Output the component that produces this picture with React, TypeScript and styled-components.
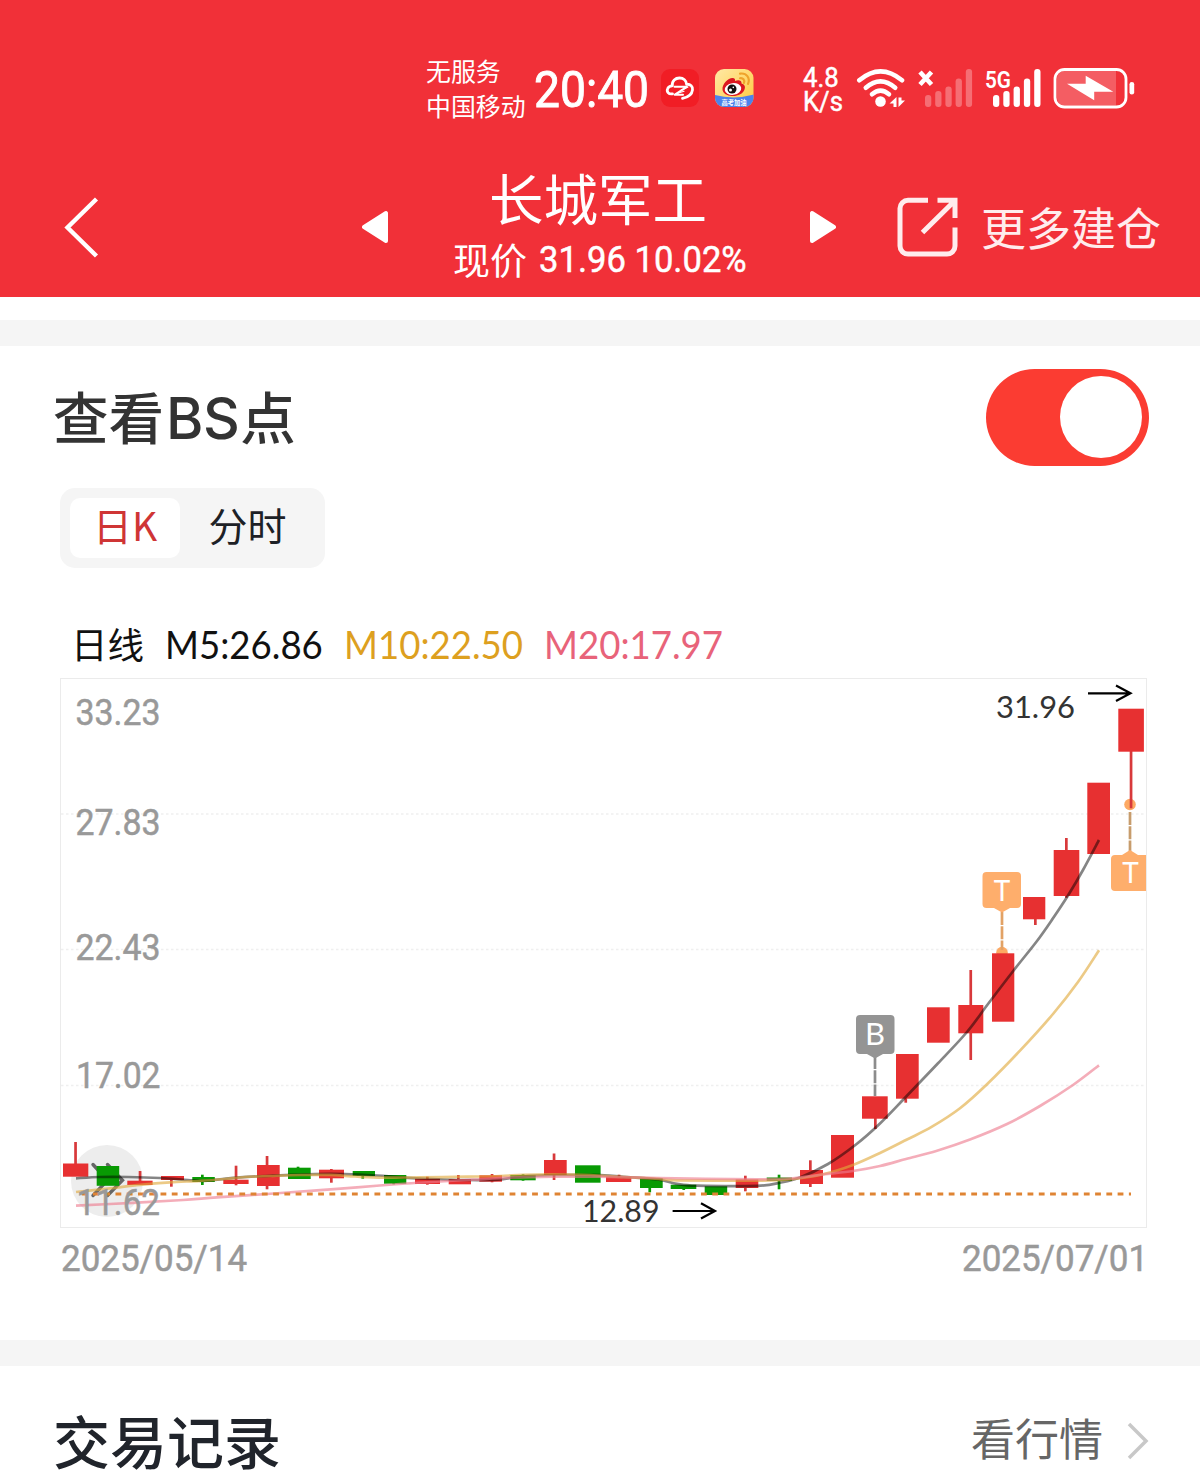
import React from "react";
import styled, { createGlobalStyle } from "styled-components";

const CJK = `"Noto Sans CJK SC", sans-serif`;

const GlobalStyle = createGlobalStyle`
  body { margin: 0; background: #fff; font-family: Lato, ${CJK}; }
  * { box-sizing: border-box; }
  svg { display: block; flex: none; }
`;

const Page = styled.main`
  width: 1200px;
  height: 1480px;
  overflow: hidden;
  background: #fff;
`;

const Header = styled.header`
  height: 297px;
  background: #f13038;
  color: #fff;
`;

const StatusBar = styled.div`
  display: flex;
  align-items: center;
  height: 134px;
  padding: 41px 0 0 426px;
`;

const Carrier = styled.div`
  width: 108px;
  font: 400 24.9px/35px ${CJK};
  white-space: nowrap;
`;

const Squeezed = styled.span<{ $x: number }>`
  display: inline-block;
  transform: scaleX(${(p) => p.$x});
  transform-origin: left center;
  white-space: pre;
`;

const Clock = styled.div`
  width: 127px;
  padding-top: 5px;
  font: 400 50.5px/50px Roboto, sans-serif;
  -webkit-text-stroke: 0.9px currentColor;
`;

const AppIcons = styled.div`
  display: flex;
  gap: 16px;
  width: 142px;
`;

const NetSpeed = styled.div`
  width: 53px;
  padding-top: 4px;
  font: 400 27px/24px Roboto, sans-serif;
  -webkit-text-stroke: 0.5px currentColor;
`;

const NavBar = styled.nav`
  display: flex;
  align-items: center;
  height: 163px;
  padding: 0 0 0 64px;
  & > svg { margin-top: 23px; }
`;

const StockTitle = styled.div`
  display: flex;
  flex-direction: column;
  align-items: center;
  width: 420px;
  padding-top: 20px;
`;

const StockName = styled.h1`
  margin: 0;
  padding-right: 2px;
  font: 400 54.5px/67px ${CJK};
`;

const StockQuote = styled.div`
  display: flex;
  width: 292px;
  font: 400 37px/58px Roboto, ${CJK};
  white-space: nowrap;
`;

const QuoteLabel = styled.span`
  flex: none;
  width: 86px;
  font-family: ${CJK};
  font-weight: 400;
`;

const QuoteValue = styled.span`
  flex: none;
  padding-top: 1px;
  -webkit-text-stroke: 0.5px currentColor;
`;

const MoreLabel = styled.span`
  margin: 22px 0 0 23px;
  font: 400 45px/60px ${CJK};
  color: #ffeced;
  white-space: nowrap;
`;

const Divider = styled.div<{ $top: number }>`
  height: 26px;
  margin-top: ${(p) => p.$top}px;
  background: #f5f5f5;
`;

const SwitchRow = styled.div`
  display: flex;
  justify-content: space-between;
  height: 120px;
  padding: 23px 51px 0 53px;
`;

const SectionTitle = styled.h2<{ $size: number; $color: string; $line: number }>`
  margin: 0;
  font: 500 ${(p) => p.$size}px/${(p) => p.$line}px ${CJK};
  color: ${(p) => p.$color};
  white-space: nowrap;
`;

const TitleLatin = styled.span`
  padding: 0 1px 0 2px;
  font-family: Inter, sans-serif;
  font-size: 57px;
  letter-spacing: -0.5px;
  line-height: 1;
`;

const Switch = styled.button`
  display: flex;
  justify-content: flex-end;
  align-items: center;
  width: 163px;
  height: 97px;
  padding: 0 7px 2px;
  border: 0;
  border-radius: 49px;
  background: #fb3c32;
`;

const Knob = styled.span`
  width: 82px;
  height: 82px;
  border-radius: 50%;
  background: #fff;
`;

const Segments = styled.div`
  display: flex;
  width: 265px;
  height: 80px;
  margin: 22px 0 0 60px;
  padding: 10px;
  border-radius: 15px;
  background: #f5f5f5;
`;

const Segment = styled.button<{ $active?: boolean }>`
  width: ${(p) => (p.$active ? 110 : 135)}px;
  height: 60px;
  padding: 0 0 7px;
  border: 0;
  border-radius: 10px;
  background: ${(p) => (p.$active ? "#fff" : "transparent")};
  color: ${(p) => (p.$active ? "#cf3535" : "#1d2126")};
  font: 400 39px/53px ${CJK};
  white-space: nowrap;
`;

const Legend = styled.div`
  display: flex;
  height: 110px;
  padding: 48px 0 0 71px;
  line-height: 56px;
  white-space: nowrap;
`;

const LegendItem = styled.span<{ $w: number; $color: string; $cjk?: boolean }>`
  width: ${(p) => p.$w}px;
  color: ${(p) => p.$color};
  font-family: ${(p) => (p.$cjk ? CJK : "Lato, sans-serif")};
  font-size: ${(p) => (p.$cjk ? 36.5 : 38.5)}px;
`;

const ChartFrame = styled.div`
  width: 1087px;
  height: 550px;
  margin-left: 60px;
  border: 1px solid #ebebeb;
  & > svg { margin: -1px; }
`;

const DateRow = styled.div`
  display: flex;
  justify-content: space-between;
  height: 112px;
  padding: 4px 53px 0 61px;
  color: #999;
  font: 400 37px/54px Roboto, sans-serif;
  -webkit-text-stroke: 0.5px currentColor;
`;

const DateText = styled.span`
  width: 185px;
`;

const RecordsRow = styled.div`
  display: flex;
  align-items: center;
  justify-content: space-between;
  padding: 32px 51px 0 53px;
`;

const MoreLink = styled.a`
  display: flex;
  align-items: center;
  gap: 24px;
  padding-top: 4px;
  color: #666;
  font: 400 44px/60px ${CJK};
  & > span { margin-top: -9px; }
`;

// x, width, body top, body bottom, wick x, wick top, wick bottom, up
type Candle = [number, number, number, number, number, number, number, 0 | 1];

const candles: Candle[] = [
  [63, 25.3, 1163.5, 1176.7, 75.5, 1142, 1176, 1],
  [96.7, 22.5, 1166, 1185.8, 108, 1166, 1185, 0],
  [127.3, 25.3, 1180.7, 1185, 140, 1171, 1185, 1],
  [161, 23, 1176, 1180, 171.3, 1176, 1186.7, 1],
  [192.3, 22.5, 1177, 1182, 202.3, 1174.7, 1185, 0],
  [223.3, 25.3, 1179.7, 1184, 236, 1165.7, 1185.3, 1],
  [257, 22.7, 1165, 1186, 267, 1156, 1189.3, 1],
  [288, 22.7, 1167.7, 1179, 298, 1166.7, 1179, 0],
  [319, 25, 1169.7, 1178.3, 331.3, 1169, 1182.7, 1],
  [352.7, 22.3, 1171, 1176, 362.7, 1171, 1178.7, 0],
  [384, 22.3, 1175, 1183.7, 393.7, 1175, 1184.3, 0],
  [415, 25, 1178.7, 1184, 427.3, 1176.7, 1184.7, 1],
  [448.7, 22.3, 1179, 1184.3, 458.3, 1175, 1184, 1],
  [479.3, 22.7, 1175.3, 1181.7, 492, 1174, 1182.3, 1],
  [510.3, 25.4, 1175, 1180.3, 523, 1174.3, 1180.7, 0],
  [544, 22.7, 1160, 1175, 554, 1153.5, 1180, 1],
  [575, 25.6, 1165.3, 1182.7, 588, 1166, 1182, 0],
  [606, 25.3, 1176.7, 1182, 619, 1174.7, 1182, 1],
  [640, 22.7, 1178, 1188, 649.7, 1178, 1192.3, 0],
  [670.7, 25.6, 1184.7, 1189, 683.7, 1185, 1190, 0],
  [704.7, 22.5, 1186.3, 1195, 716, 1187, 1195, 0],
  [735.7, 22.6, 1179.5, 1188, 745.3, 1175.7, 1191.3, 1],
  [766.7, 25.3, 1177.5, 1181, 779, 1174.7, 1189.3, 0],
  [800, 23, 1170, 1184, 810.3, 1160.3, 1187, 1],
  [831, 23, 1135, 1177.7, 842, 1136, 1177, 1],
  [862, 25.7, 1096.3, 1118.7, 875.3, 1097, 1129, 1],
  [896, 22.7, 1054, 1098.7, 905.7, 1055, 1102.7, 1],
  [927, 22.7, 1007.3, 1042.7, 938, 1008, 1042, 1],
  [958.3, 25, 1005, 1033.3, 970.7, 970, 1060, 1],
  [992, 22.3, 953.3, 1021.7, 1003, 954, 1021, 1],
  [1023, 22.3, 897, 919.3, 1035.3, 898, 925, 1],
  [1053.7, 25.6, 850, 896, 1066.3, 838, 897.7, 1],
  [1087.3, 22.7, 782.7, 854, 1098, 783, 853, 1],
  [1118.3, 25.6, 708.7, 751.7, 1131, 709, 808.3, 1],
];

const averages: { color: string; opacity: number; points: number[][] }[] = [
  {
    color: "#000", opacity: 0.48,
    points: [[76, 1178.3], [100, 1177], [128, 1177], [160, 1178], [188, 1180], [203, 1180.8], [220, 1179.3], [240, 1177.3], [280, 1175.3], [315, 1174.1], [345, 1174.1], [377, 1175.5], [400, 1177.3], [433, 1179], [467, 1180], [498, 1179.6], [523, 1176.3], [553, 1175], [600, 1175.1], [627, 1177], [658, 1179.5], [677, 1183.8], [697, 1185.7], [757, 1185.8], [780, 1182.7], [800, 1177.5], [828, 1164], [856, 1144.5], [880, 1123.5], [906, 1096.7], [938, 1063.3], [967, 1032], [988, 1004], [1014, 970], [1037, 941], [1053, 918.3], [1068, 895.5], [1083, 870], [1099, 840]],
  },
  {
    color: "#e0aa3c", opacity: 0.62,
    points: [[76, 1192], [110, 1188.3], [140, 1184.8], [170, 1182.3], [200, 1180.9], [225, 1179], [245, 1177], [270, 1176], [300, 1175], [330, 1174.9], [355, 1176.5], [383, 1177.7], [420, 1177.3], [467, 1176.7], [500, 1176], [523, 1174.8], [553, 1174.3], [590, 1175], [620, 1176.8], [655, 1178.7], [677, 1180.3], [757, 1180.7], [790, 1179.5], [823, 1174.3], [853, 1165], [880, 1153], [907, 1139.5], [932, 1126.7], [960, 1108.3], [987, 1084.3], [1020, 1050.7], [1053, 1014], [1078, 982], [1099, 950.3]],
  },
  {
    color: "#ee7b8e", opacity: 0.62,
    points: [[76, 1205.7], [133, 1202.8], [183, 1200], [217, 1197.3], [267, 1194], [317, 1190.3], [357, 1187.3], [406, 1183.5], [440, 1181.5], [473, 1179.7], [510, 1177.7], [553, 1176.7], [600, 1176.7], [660, 1178], [757, 1179.3], [793, 1178.3], [823, 1174.5], [853, 1171], [880, 1166], [906, 1159], [937, 1150.7], [970, 1139.5], [1007, 1124], [1040, 1106], [1073, 1085], [1099, 1065.3]],
  },
];

function smoothPath(pts: number[][]): string {
  let d = `M${pts[0][0]} ${pts[0][1]}`;
  for (let i = 0; i < pts.length - 1; i++) {
    const a = pts[Math.max(0, i - 1)];
    const b = pts[i];
    const c = pts[i + 1];
    const e = pts[Math.min(pts.length - 1, i + 2)];
    d += `C${b[0] + (c[0] - a[0]) / 6} ${b[1] + (c[1] - a[1]) / 6} ${c[0] - (e[0] - b[0]) / 6} ${c[1] - (e[1] - b[1]) / 6} ${c[0]} ${c[1]}`;
  }
  return d;
}

const AxisLabel = styled.text`
  font: 400 37px Roboto, sans-serif;
  fill: #999;
  stroke: #999;
  stroke-width: 0.5px;
`;

const PriceLabel = styled.text`
  font: 400 31.5px Lato, sans-serif;
  fill: #333;
`;

const MarkerLetter = styled.text<{ $size: number }>`
  font: 400 ${(p) => p.$size}px Lato, sans-serif;
  fill: #fff;
  text-anchor: middle;
`;

const axis: [string, number, number, number][] = [
  ["33.23", 75.5, 725, 85],
  ["27.83", 75.5, 835, 85],
  ["22.43", 75.5, 960, 85],
  ["17.02", 76, 1088, 84.5],
  ["11.62", 76.5, 1215, 83.5],
];

function KLineChart() {
  return (
    <svg width="1087" height="550" viewBox="60 678 1087 550">
      {[814, 949.5, 1085.5].map((y) => (
        <path key={y} d={`M61 ${y}H1146`} stroke="#efefef" strokeWidth="1.3" strokeDasharray="2.5 2.5" />
      ))}
      <circle cx="107" cy="1181" r="36" fill="#ededed" />
      <g fill="none" stroke="#666" strokeWidth="3.4" strokeLinecap="round">
        <path d="M93 1164.5L107.5 1180.3L93 1195.5" />
        <path d="M107.5 1164.5L122.5 1180.3L107.5 1195.5" />
      </g>
      <circle cx="1130" cy="804.5" r="5.8" fill="#fda963" />
      <circle cx="1002" cy="952.5" r="5.8" fill="#fda963" />
      {candles.map(([x, w, t, b, wx, wt, wb, up]) => (
        <g key={x} fill={up ? "#e73031" : "#089a03"}>
          <rect x={wx - 1.3} y={wt} width="2.7" height={wb - wt} fill={up ? "#d8393b" : "#089a03"} />
          <rect x={x} y={t} width={w} height={b - t} />
        </g>
      ))}
      {averages.map((a) => (
        <path key={a.color} d={smoothPath(a.points)} fill="none" stroke={a.color} strokeOpacity={a.opacity} strokeWidth="2.7" />
      ))}
      <path d="M81.7 1194H1131" stroke="#df8433" strokeWidth="2.8" strokeDasharray="5.8 5.46" />
      {axis.map(([label, x, y, w]) => (
        <AxisLabel key={label} x={x} y={y} textLength={w} lengthAdjust="spacingAndGlyphs">{label}</AxisLabel>
      ))}
      <g strokeWidth="2.7" strokeDasharray="13 1.2">
        <path d="M875 1056V1096" stroke="#8c8c8c" />
        <path d="M1002 912V950" stroke="#e2a265" />
        <path d="M1130 812V852" stroke="#c79c6c" />
      </g>
      <path d="M860 1015h30.5a4 4 0 0 1 4 4v31a4 4 0 0 1-4 4H883l-8 4.5l-8-4.5h-7a4 4 0 0 1-4-4v-31a4 4 0 0 1 4-4z" fill="#949494" />
      <path d="M986.5 872h30.5a4 4 0 0 1 4 4v28a4 4 0 0 1-4 4h-7l-8 4.5l-8-4.5h-7.5a4 4 0 0 1-4-4v-28a4 4 0 0 1 4-4z" fill="#feae6c" />
      <path d="M1146 855h-8l-8-5l-8 5h-7a4 4 0 0 0-4 4v28a4 4 0 0 0 4 4h31z" fill="#feae6c" />
      <MarkerLetter $size={31} x="875" y="1045">B</MarkerLetter>
      <MarkerLetter $size={28} x="1002" y="900.5">T</MarkerLetter>
      <MarkerLetter $size={28} x="1130.5" y="883">T</MarkerLetter>
      <PriceLabel x="996" y="718" textLength="79" lengthAdjust="spacingAndGlyphs">31.96</PriceLabel>
      <PriceLabel x="582" y="1222" textLength="77.5" lengthAdjust="spacingAndGlyphs">12.89</PriceLabel>
      <g fill="none" stroke="#000" strokeWidth="2.2">
        <path d="M1088 693.3H1130.5M1116 685.5L1130.5 693.3L1116 701" />
        <path d="M672.6 1211H715M701 1203.2L715 1211L701 1218.5" />
      </g>
    </svg>
  );
}

function CloudAppIcon() {
  return (
    <svg width="38" height="38" viewBox="0 0 38 38">
      <rect width="38" height="38" rx="9" fill="#f11d25" />
      <g fill="none" stroke="#fff" strokeWidth="2.8" strokeLinecap="round" strokeLinejoin="round">
        <path d="M11.5 24.8C7.5 25.5 5.3 22.5 6.7 19.5C7.6 17.4 9.5 16.8 11.3 16.8C10.8 11.5 14.5 9 18.5 9C22.5 9 25.3 11.4 25.6 15.3C29.5 15 32 17.5 31.5 20.8C31 25 27 28.3 21.5 29.3" />
        <path d="M13.5 17.8H25.8L13.5 25.8H22" strokeWidth="2" />
        <path d="M20 21.2L27 18M15 24.8L23 22.3" strokeWidth="1.2" />
      </g>
    </svg>
  );
}

function WeiboIcon() {
  return (
    <svg width="39" height="38" viewBox="0 0 39 38">
      <defs>
        <linearGradient id="sky" x1="0" y1="0" x2="1" y2="1">
          <stop offset="0" stopColor="#ffe9a5" />
          <stop offset="1" stopColor="#ffc93c" />
        </linearGradient>
        <clipPath id="tile"><rect width="38.5" height="38" rx="9" /></clipPath>
      </defs>
      <g clipPath="url(#tile)">
        <rect width="39" height="38" fill="url(#sky)" />
        <path d="M0 26Q19 31 39 25.5V38H0z" fill="#4d82ec" />
        <path d="M7.5 20.5C7 15 13 9 17.5 9C20 9 20.3 10.5 20 12C23 10.5 27 11 26.5 14.5C30 15.5 30.5 18 29.5 20.5C28 25 22 27.5 17 27C12 26.7 8 24.5 7.5 20.5z" fill="#dc1820" />
        <ellipse cx="18" cy="20" rx="8.3" ry="5.9" fill="#fff" transform="rotate(-8 18 20)" />
        <circle cx="17" cy="20" r="4.5" fill="#15100f" />
        <circle cx="15.5" cy="21" r="1.5" fill="#fff" />
        <circle cx="18.3" cy="18.4" r="0.8" fill="#fff" />
        <g fill="none" stroke="#efa32b" strokeWidth="2.1" strokeLinecap="round">
          <path d="M25 9.2C28 8.7 30 11 29 14" />
          <path d="M25 4.6C31.5 3.5 35.5 9 33 15" />
        </g>
        <text x="19" y="36" fontSize="6.3" fontWeight="700" textAnchor="middle" fill="#fff" fontFamily="Noto Sans CJK SC">高考加油</text>
      </g>
    </svg>
  );
}

function StatusIcons() {
  const heights = [12, 16, 20.5, 28.5, 38];
  return (
    <svg width="280" height="44" viewBox="856 66 280 44">
      <g fill="none" stroke="#fff" strokeWidth="4.6" strokeLinecap="round">
        <path d="M859.3 80.3Q880.5 62.5 902 80.3" />
        <path d="M865.8 87.8Q880.5 75 895.2 87.8" />
        <path d="M872 94.3Q880.5 87 889 94.3" />
      </g>
      <circle cx="880.5" cy="101.5" r="5.3" fill="#fff" />
      <path d="M896.5 97V107H893.5V103.5H889.5zM898.5 97.500V107L905 100.500H901.500V97.500z" fill="#fff" />
      <path d="M920 72L931.5 84.5M931.5 72L920 84.5" stroke="#fff" strokeWidth="4.6" />
      {heights.map((h, i) => (
        <rect key={h} x={925 + i * 10.2} y={107 - h} width="6.3" height={h} rx="3" fill="#fff" fillOpacity="0.3" />
      ))}
      {heights.map((h, i) => (
        <rect key={h} x={993 + i * 10.3} y={107 - h} width="6.3" height={h} rx="3" fill="#fff" />
      ))}
      <text x="985" y="87.5" fontFamily="Roboto, sans-serif" fontWeight="600" fontSize="24.5" textLength="26" lengthAdjust="spacingAndGlyphs" fill="#fff">5G</text>
      <rect x="1055" y="69.5" width="71" height="37.5" rx="9.5" fill="none" stroke="#fff" strokeWidth="2.8" />
      <path d="M1064.5 71H1116V105.5H1064.5a7.5 7.5 0 0 1-7.5-7.5v-19.5a7.5 7.5 0 0 1 7.5-7.5z" fill="#fff" fillOpacity="0.22" />
      <path d="M1067 83.7H1085.7V75.7L1113.3 91.8H1094.2V100.2z" fill="#fff" />
      <rect x="1129.5" y="82" width="4.7" height="12.5" rx="2.3" fill="#fff" />
    </svg>
  );
}

export default function App() {
  return (
    <Page>
      <GlobalStyle />
      <Header>
        <StatusBar>
          <Carrier>无服务<br />中国移动</Carrier>
          <Clock><Squeezed $x={0.915}>20:40</Squeezed></Clock>
          <AppIcons>
            <CloudAppIcon />
            <WeiboIcon />
          </AppIcons>
          <NetSpeed>
            <Squeezed $x={0.95}>4.8<br />K/s</Squeezed>
          </NetSpeed>
          <StatusIcons />
        </StatusBar>
        <NavBar>
          <svg width="298" height="62" viewBox="64 196 298 62">
            <path d="M96.5 199L67.5 227.5L96.5 256" fill="none" stroke="#fff" strokeWidth="4.4" />
          </svg>
          <svg width="27" height="34" viewBox="0 0 27 34">
            <path d="M2 17L24 3V31z" fill="#fff" stroke="#fff" strokeWidth="4" strokeLinejoin="round" />
          </svg>
          <StockTitle>
            <StockName>长城军工</StockName>
            <StockQuote>
              <QuoteLabel>现价</QuoteLabel>
              <QuoteValue><Squeezed $x={0.935}>31.96 10.02%</Squeezed></QuoteValue>
            </StockQuote>
          </StockTitle>
          <svg width="27" height="34" viewBox="0 0 27 34">
            <path d="M25 17L3 3V31z" fill="#fff" stroke="#fff" strokeWidth="4" strokeLinejoin="round" />
          </svg>
          <svg width="122" height="62" viewBox="836 196 122 62">
            <g fill="none" stroke="#ffeced" strokeWidth="5">
              <path d="M928 200.3H908a8 8 0 0 0-8 8V246a8 8 0 0 0 8 8H947a8 8 0 0 0 8-8V227.5" />
              <path d="M937.5 200.3H955V218M954 201.5L922.5 232.5" />
            </g>
          </svg>
          <MoreLabel>更多建仓</MoreLabel>
        </NavBar>
      </Header>

      <Divider $top={23} />
      <SwitchRow>
        <SectionTitle $size={55.5} $color="#333" $line={92}>查看<TitleLatin>BS</TitleLatin>点</SectionTitle>
        <Switch aria-label="查看BS点"><Knob /></Switch>
      </SwitchRow>
      <Segments>
        <Segment $active>日K</Segment>
        <Segment>分时</Segment>
      </Segments>
      <Legend>
        <LegendItem $w={94} $color="#111" $cjk>日线</LegendItem>
        <LegendItem $w={179} $color="#111"><Squeezed $x={0.95}>M5:26.86</Squeezed></LegendItem>
        <LegendItem $w={200} $color="#dda01f"><Squeezed $x={0.95}>M10:22.50</Squeezed></LegendItem>
        <LegendItem $w={180} $color="#e8637a"><Squeezed $x={0.95}>M20:17.97</Squeezed></LegendItem>
      </Legend>
      <ChartFrame><KLineChart /></ChartFrame>
      <DateRow>
        <DateText><Squeezed $x={0.945}>2025/05/14</Squeezed></DateText>
        <DateText><Squeezed $x={0.945}>2025/07/01</Squeezed></DateText>
      </DateRow>

      <Divider $top={0} />
      <RecordsRow>
        <SectionTitle $size={57} $color="#20242b" $line={82}>交易记录</SectionTitle>
        <MoreLink>
          <span>看行情</span>
          <svg width="22" height="38" viewBox="0 0 22 38">
            <path d="M2 2L19 19L2 36" fill="none" stroke="#c8c8c8" strokeWidth="3.5" />
          </svg>
        </MoreLink>
      </RecordsRow>
    </Page>
  );
}
